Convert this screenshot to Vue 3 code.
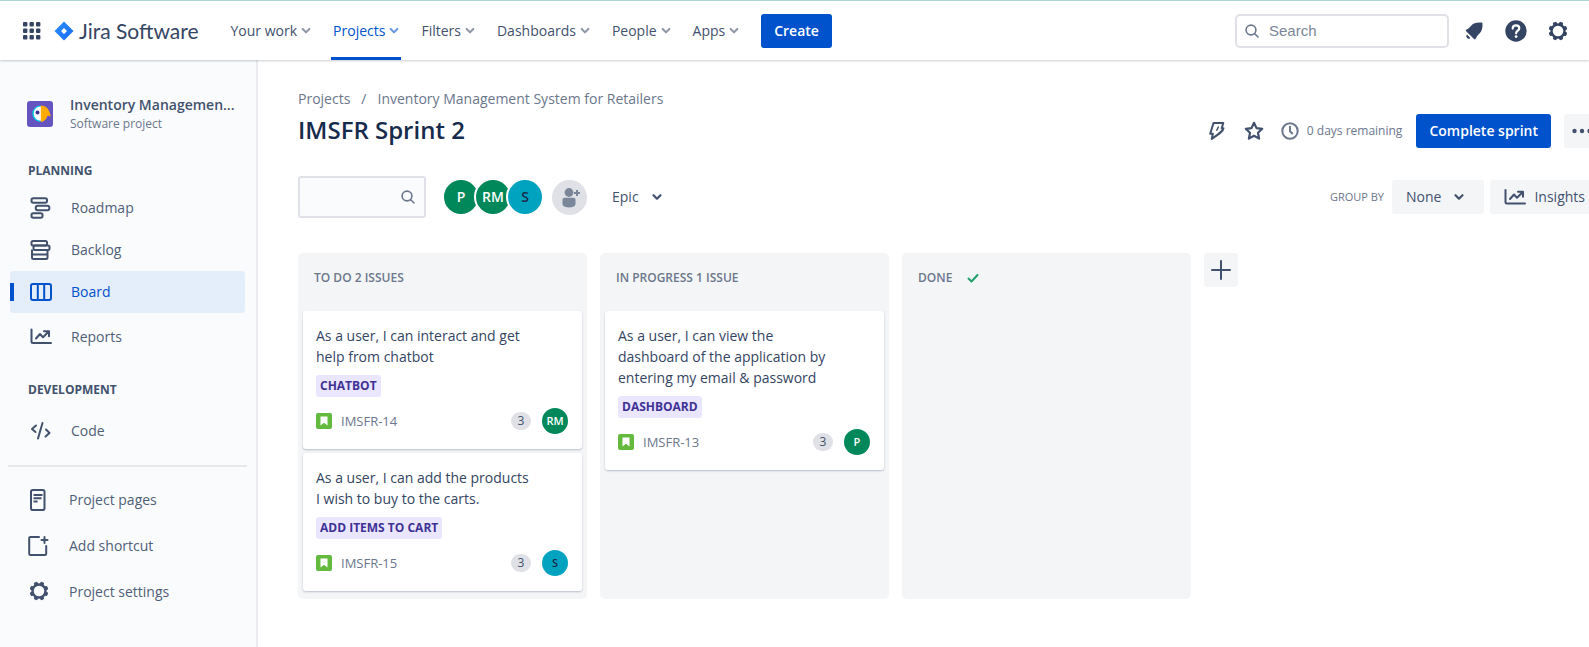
<script setup>
const navItems = [
  { label: 'Your work' },
  { label: 'Projects', active: true },
  { label: 'Filters' },
  { label: 'Dashboards' },
  { label: 'People' },
  { label: 'Apps' },
]

const members = [
  { initials: 'P', tone: 'green' },
  { initials: 'RM', tone: 'green' },
  { initials: 'S', tone: 'teal' },
]

const columns = [
  {
    title: 'To do 2 issues',
    cards: [
      { text: 'As a user, I can interact and get help from chatbot', epic: 'Chatbot', key: 'IMSFR-14', points: 3, initials: 'RM', tone: 'green' },
      { text: 'As a user, I can add the products I wish to buy to the carts.', epic: 'Add items to cart', key: 'IMSFR-15', points: 3, initials: 'S', tone: 'teal' },
    ],
  },
  {
    title: 'In progress 1 issue',
    cards: [
      { text: 'As a user, I can view the dashboard of the application by entering my email & password', epic: 'Dashboard', key: 'IMSFR-13', points: 3, initials: 'P', tone: 'green' },
    ],
  },
  { title: 'Done', done: true, cards: [] },
]

const teeth = [0, 45, 90, 135, 180, 225, 270, 315]
</script>

<template>
  <div class="app">
    <header class="topbar">
      <button class="icon-btn" aria-label="Switch to">
        <svg width="18" height="18" viewBox="0 0 18 18" fill="#344563">
          <template v-for="r in 3" :key="r">
            <rect v-for="c in 3" :key="c" :x="(c - 1) * 6.5" :y="(r - 1) * 6.5" width="4.4" height="4.4" rx="1" />
          </template>
        </svg>
      </button>
      <a class="brand" href="#">
        <svg width="20" height="20" viewBox="0 0 20 20">
          <defs>
            <linearGradient id="brandShade" x1="0" y1="0" x2="1" y2="1">
              <stop offset="0.3" stop-color="#2684ff" />
              <stop offset="1" stop-color="#1868e8" />
            </linearGradient>
          </defs>
          <path d="M10 .5 19.5 10 10 19.5.5 10Z M10 7 7 10l3 3 3-3Z" fill="url(#brandShade)" fill-rule="evenodd" stroke-linejoin="round" />
        </svg>
        <span>Jira Software</span>
      </a>
      <nav class="topnav" aria-label="Primary">
        <button v-for="n in navItems" :key="n.label" class="topnav-item" :class="{ active: n.active }">
          <span>{{ n.label }}</span>
          <svg width="10" height="8" viewBox="0 0 10 8" fill="none" stroke="currentColor" stroke-width="2" stroke-linecap="round" stroke-linejoin="round"><path d="m1.7 2 3.3 3.4L8.3 2" /></svg>
        </button>
      </nav>
      <button class="primary">Create</button>
      <div class="topbar-end">
        <label class="search">
          <svg width="16" height="16" viewBox="0 0 16 16" fill="none" stroke="#6b778c" stroke-width="1.6" stroke-linecap="round"><circle cx="7" cy="7" r="4.9" /><path d="m10.7 10.7 3.3 3.3" /></svg>
          <input type="text" placeholder="Search" aria-label="Search" />
        </label>
        <button class="icon-btn" aria-label="Notifications">
          <svg width="20" height="20" viewBox="0 0 20 20" fill="#344563"><path d="M2.2 10.2c-.7-.7-.4-1.4.4-1.7 2.2-.8 3.4-2.4 5-4.2C9.6 2 12.6 1.3 17.3 1.6c.8 0 1.2.4 1.2 1.2.2 4.7-.8 7.6-3 9.6-1.9 1.7-3 3.3-3.9 5.4-.3.8-1 .9-1.6.3Z" /><path d="M3 13.6a2.3 2.3 0 0 0 3.4 3.3Z" /></svg>
        </button>
        <button class="icon-btn" aria-label="Help">
          <svg width="22" height="22" viewBox="0 0 22 22"><circle cx="11" cy="11" r="10.7" fill="#344563" /><path d="M7.7 8.6c0-2 1.4-3.2 3.3-3.2s3.3 1.2 3.3 2.9c0 2.3-3.2 2.500-3.2 5" fill="none" stroke="#fff" stroke-width="2.2" stroke-linecap="round" /><circle cx="11.1" cy="16.6" r="1.4" fill="#fff" /></svg>
        </button>
        <button class="icon-btn" aria-label="Settings">
          <svg width="20" height="20" viewBox="0 0 20 20"><circle cx="10" cy="10" r="6.5" fill="none" stroke="#344563" stroke-width="2.4" /><rect v-for="a in teeth" :key="a" x="8" y="0.6" width="4" height="3.6" rx="1.2" fill="#344563" :transform="`rotate(${a + 22.5} 10 10)`" /></svg>
        </button>
      </div>
    </header>

    <div class="body">
      <aside class="sidebar">
        <div class="project">
          <svg width="26" height="26" viewBox="0 0 26 26">
            <rect width="26" height="26" rx="3" fill="#6554c0" />
            <path d="M13.5 4.5a8.2 8.2 0 0 0 0 16.4Z" fill="#00c7e5" />
            <path d="M14 5.6c-4.5 0-7.2 3.2-7.2 7s2.7 7.2 7.2 7.2Z" fill="#fff" />
            <path d="M13.8 4.6c5.2 0 8.6 3.2 10 11.2-1.2-.9-2-1.1-3.4-.9-1.2 3.6-3.4 5.9-6.6 6Z" fill="#ffab00" />
            <circle cx="10.5" cy="11.4" r="2" fill="#403294" />
          </svg>
          <div class="project-text">
            <div class="project-name">Inventory Managemen...</div>
            <div class="project-type">Software project</div>
          </div>
        </div>

        <h2 class="section">Planning</h2>
        <nav class="side-list" aria-label="Planning">
          <a class="side-item" href="#">
            <svg width="22" height="22" viewBox="0 0 22 22" fill="none" stroke="#42526e" stroke-width="2"><rect x="1.5" y="1.2" width="15.5" height="4.6" rx="1.8" /><rect x="5.8" y="8.7" width="13.5" height="4.6" rx="1.8" /><rect x="1.5" y="16.2" width="11" height="4.6" rx="1.8" /></svg>
            <span>Roadmap</span>
          </a>
          <a class="side-item" href="#">
            <svg width="22" height="22" viewBox="0 0 22 22" fill="none" stroke="#42526e" stroke-width="2"><rect x="1.5" y="2" width="15.5" height="4.5" rx="1.5" /><rect x="3.5" y="6.5" width="16" height="4.5" rx="1.5" /><path d="M2 10.5v8.2c0 .8.5 1.3 1.3 1.3h12.9c.8 0 1.3-.5 1.3-1.3V11M2 15.5h15.5" /></svg>
            <span>Backlog</span>
          </a>
          <a class="side-item selected" href="#" aria-current="page">
            <svg width="22" height="22" viewBox="0 0 22 22" fill="none" stroke="#0052cc" stroke-width="2"><rect x="1" y="3" width="20" height="16" rx="2" /><path d="M7.8 3v16M14.2 3v16" /></svg>
            <span>Board</span>
          </a>
          <a class="side-item spaced" href="#">
            <svg width="22" height="22" viewBox="0 0 22 22" fill="none" stroke="#42526e" stroke-width="2" stroke-linecap="round" stroke-linejoin="round"><path d="M1.5 3.5v12A1.500 1.500 0 0 0 3 17h18M6 12.500 10 8l3 3.300 5.500-5.600M14 5.200h5v5" /></svg>
            <span>Reports</span>
          </a>
        </nav>

        <h2 class="section">Development</h2>
        <nav class="side-list development" aria-label="Development">
          <a class="side-item" href="#">
            <svg width="22" height="22" viewBox="0 0 22 22" fill="none" stroke="#42526e" stroke-width="2" stroke-linecap="round" stroke-linejoin="round"><path d="M6 5.500 2 9l3.500 3M12.500 3 8 18.500M16 9.500l3.500 3.500-4 3.500" /></svg>
            <span>Code</span>
          </a>
        </nav>

        <hr />

        <nav class="side-list extra" aria-label="Project">
          <a class="side-item" href="#">
            <svg width="22" height="22" viewBox="0 0 22 22" fill="none" stroke="#42526e" stroke-width="2"><rect x="3" y="1" width="13.5" height="20" rx="1.8" /><path d="M5.5 6h9M5.5 9.200h8M5.500 12.500h4" /></svg>
            <span>Project pages</span>
          </a>
          <a class="side-item" href="#">
            <svg width="22" height="22" viewBox="0 0 22 22" fill="none" stroke="#42526e" stroke-width="2" stroke-linecap="round"><path d="M11 2H2.500A1.200 1.200 0 0 0 1.200 3.200v15.600c0 .7.500 1.200 1.200 1.200H17c.7 0 1.200-.5 1.200-1.200V11" /><path d="M16.500 2v6M13.500 5h6" /></svg>
            <span>Add shortcut</span>
          </a>
          <a class="side-item" href="#">
            <svg width="22" height="22" viewBox="0 0 22 22"><circle cx="11" cy="10" r="6.5" fill="none" stroke="#42526e" stroke-width="2.4" /><rect v-for="a in teeth" :key="a" x="9" y="0.6" width="4" height="3.6" rx="1.2" fill="#42526e" :transform="`rotate(${a + 22.5} 11 10)`" /></svg>
            <span>Project settings</span>
          </a>
        </nav>
      </aside>

      <main class="main">
        <nav class="crumbs" aria-label="Breadcrumbs">
          <a href="#">Projects</a>
          <span>/</span>
          <a href="#">Inventory Management System for Retailers</a>
        </nav>

        <div class="title-row">
          <h1>IMSFR Sprint 2</h1>
          <div class="actions">
            <button class="icon-btn" aria-label="Automation">
              <svg width="20" height="20" viewBox="0 0 20 20" fill="none" stroke="#42526e" stroke-width="2" stroke-linejoin="round" stroke-linecap="round"><path d="M6.500 2h9.800l-1.600 5.200h1.800c-.3 3-4.300 5.600-11.800 10.800l1.200-5.200H3.200Z" /><path d="m11.300 6-1.500 3.200" stroke-width="1.500" /></svg>
            </button>
            <button class="icon-btn star" aria-label="Star">
              <svg width="20" height="20" viewBox="0 0 20 20" fill="none" stroke="#42526e" stroke-width="2.200" stroke-linejoin="round"><path d="m10 1.800 2.500 5.300 5.700.7-4.200 4 1.100 5.800-5.100-2.800-5.100 2.800L6 11.800l-4.200-4 5.700-.7Z" /></svg>
            </button>
            <div class="remaining">
              <svg width="18" height="18" viewBox="0 0 18 18" fill="none" stroke="#6b778c" stroke-width="2" stroke-linecap="round" stroke-linejoin="round"><circle cx="9" cy="9" r="7.700" /><path d="M9 4.800V9.300l2.200 2.200" /></svg>
              <span>0 days remaining</span>
            </div>
            <button class="primary complete">Complete sprint</button>
            <button class="subtle" aria-label="More">
              <svg width="20" height="6" viewBox="0 0 20 6" fill="#42526e"><circle cx="2.500" cy="3" r="2.200" /><circle cx="10" cy="3" r="2.200" /><circle cx="17.500" cy="3" r="2.200" /></svg>
            </button>
          </div>
        </div>

        <div class="toolbar">
          <label class="filter">
            <input type="text" aria-label="Search this board" />
            <svg width="16" height="16" viewBox="0 0 16 16" fill="none" stroke="#6b778c" stroke-width="1.600" stroke-linecap="round"><circle cx="7" cy="7" r="4.900" /><path d="m10.700 10.700 3.300 3.300" /></svg>
          </label>
          <div class="members">
            <button v-for="m in members" :key="m.initials" class="member" :class="m.tone">{{ m.initials }}</button>
          </div>
          <button class="add-member" aria-label="Add people">
            <svg width="22" height="22" viewBox="0 0 22 22" fill="#7a869a"><circle cx="10" cy="6.500" r="4.400" /><path d="M3.500 14c0-1.300.8-2.200 2-2.200h9c1.200 0 2 .9 2 2.200v3.500c0 2.600-2.500 3.900-6.500 3.900s-6.500-1.300-6.500-3.900Z" /><path d="M18 4v6M15 7h6" stroke="#7a869a" stroke-width="2" /></svg>
          </button>
          <button class="plain">
            <span>Epic</span>
            <svg width="12" height="8" viewBox="0 0 12 8" fill="none" stroke="#42526e" stroke-width="2.200" stroke-linecap="round" stroke-linejoin="round"><path d="M2.500 2.200 6 5.700l3.500-3.500" /></svg>
          </button>
          <div class="toolbar-end">
            <span class="group-label">GROUP BY</span>
            <button class="subtle group">
              <span>None</span>
              <svg width="12" height="8" viewBox="0 0 12 8" fill="none" stroke="#42526e" stroke-width="2.200" stroke-linecap="round" stroke-linejoin="round"><path d="M2.500 2.200 6 5.700l3.500-3.500" /></svg>
            </button>
            <button class="subtle insights">
              <svg width="22" height="20" viewBox="0 0 22 20" fill="none" stroke="#42526e" stroke-width="2" stroke-linecap="round" stroke-linejoin="round"><path d="M1.500 3v12A1.500 1.500 0 0 0 3 16.500h18M6 12l4-4.500 3 3.300 5.500-5.600M14 4.700h5v5" /></svg>
              <span>Insights</span>
            </button>
          </div>
        </div>

        <div class="board">
          <section v-for="col in columns" :key="col.title" class="column">
            <h2 class="column-title">
              <span>{{ col.title }}</span>
              <svg v-if="col.done" width="14" height="12" viewBox="0 0 14 12" fill="none" stroke="#22a06b" stroke-width="2" stroke-linecap="round" stroke-linejoin="round"><path d="m2.500 6.500 3 3 6-6.500" /></svg>
            </h2>
            <article v-for="card in col.cards" :key="card.key" class="card">
              <p class="card-text">{{ card.text }}</p>
              <span class="epic">{{ card.epic }}</span>
              <div class="card-foot">
                <svg width="16" height="16" viewBox="0 0 16 16"><rect width="16" height="16" rx="2" fill="#63ba3c" /><path d="M4.500 3.500h7v9L8 9.800l-3.500 2.700Z" fill="#fff" /></svg>
                <a class="key" href="#">{{ card.key }}</a>
                <span class="points">{{ card.points }}</span>
                <span class="avatar" :class="card.tone">{{ card.initials }}</span>
              </div>
            </article>
          </section>
          <button class="subtle add-column" aria-label="Create column">
            <svg width="20" height="20" viewBox="0 0 20 20" stroke="#42526e" stroke-width="2" stroke-linecap="round"><path d="M10 1v18M1 10h18" /></svg>
          </button>
        </div>
      </main>
    </div>
  </div>
</template>

<style>
body {
  margin: 0;
  background: #fff;
}
</style>

<style scoped>
.app {
  display: flex;
  flex-direction: column;
  min-height: 100vh;
  overflow: hidden;
  font-family: 'Open Sans', 'Noto Sans', sans-serif;
  font-size: 14px;
  line-height: 20px;
  color: #42526e;
}
.app *,
.app *::before {
  box-sizing: border-box;
}
button {
  display: inline-flex;
  align-items: center;
  justify-content: center;
  margin: 0;
  padding: 0;
  border: 0;
  background: none;
  font: inherit;
  color: inherit;
  white-space: nowrap;
  cursor: pointer;
}
a {
  color: inherit;
  text-decoration: none;
}
svg {
  display: block;
  flex: none;
}

/* Top bar */
.topbar {
  display: flex;
  align-items: center;
  height: 60px;
  padding: 0 21px 0 23px;
  border-top: 1px solid #a9d5d3;
  background: #fff;
  box-shadow: 0 1px 2px rgba(9, 30, 66, 0.22);
  position: relative;
}
.brand {
  display: flex;
  align-items: center;
  gap: 5px;
  margin-left: 13px;
  font-family: Lato, sans-serif;
  font-size: 21px;
  line-height: 24px;
  color: #344563;
  white-space: nowrap;
}
.topnav {
  display: flex;
  align-self: stretch;
  gap: 18px;
  margin: 0 20px 0 30px;
}
.topnav-item {
  gap: 4px;
  padding: 3px 2px 0;
  border-bottom: 3px solid transparent;
  font-weight: 500;
}
.topnav-item svg {
  opacity: 0.6;
}
.topnav-item.active {
  border-bottom-color: #0052cc;
  color: #0052cc;
}
.primary {
  height: 34px;
  padding: 0 13px;
  border-radius: 3px;
  background: #0052cc;
  color: #fff;
  font-weight: 600;
}
.topbar-end {
  display: flex;
  align-items: center;
  gap: 21px;
  margin-left: auto;
}
.search {
  display: flex;
  align-items: center;
  gap: 9px;
  width: 214px;
  height: 34px;
  margin-right: -6px;
  padding: 0 7px;
  border: 2px solid #dfe1e6;
  border-radius: 5px;
}
input {
  min-width: 0;
  flex: 1;
  padding: 0;
  border: 0;
  outline: 0;
  background: none;
  font-family: 'Liberation Sans', sans-serif;
  font-size: 15px;
  color: #42526e;
}
input::placeholder {
  color: #7a869a;
  opacity: 1;
}

/* Sidebar */
.body {
  display: flex;
  flex: 1;
}
.sidebar {
  flex: none;
  width: 258px;
  padding: 35px 11px 24px 10px;
  border-right: 2px solid #ebecf0;
  background: #fafbfc;
}
.project {
  display: flex;
  align-items: center;
  gap: 17px;
  padding-left: 17px;
}
.project-name {
  font-weight: 600;
  white-space: nowrap;
}
.project-type {
  font-size: 12px;
  line-height: 18px;
  color: #6b778c;
}
.section {
  margin: 29px 0 0 18px;
  font-size: 12px;
  line-height: 18px;
  font-weight: 700;
  text-transform: uppercase;
}
.side-list {
  display: flex;
  flex-direction: column;
  padding-top: 7px;
}
.side-item {
  display: flex;
  align-items: center;
  gap: 19px;
  height: 42px;
  padding-left: 20px;
  border-radius: 4px;
  color: #505f79;
  position: relative;
}
.side-item.selected {
  background: #e4eefb;
  color: #0052cc;
}
.side-item.selected::before {
  content: '';
  position: absolute;
  left: 0;
  top: 12px;
  width: 4px;
  height: 18px;
  background: #0052cc;
}
.side-item.spaced {
  margin-top: 3px;
}
.side-list + .section {
  margin-top: 23px;
}
.development {
  padding-top: 11px;
}
hr {
  margin: 13px -2px 0;
  border: 0;
  border-top: 2px solid #e6e8ec;
}
.extra {
  gap: 4px;
  padding-top: 12px;
}
.extra .side-item {
  padding-left: 18px;
}

/* Main */
.main {
  flex: 1;
  min-width: 0;
  padding: 29px 0 24px 40px;
}
.crumbs {
  display: flex;
  gap: 11px;
  color: #6b778c;
}
.title-row {
  display: flex;
  align-items: center;
  justify-content: space-between;
  margin-top: 5px;
  margin-right: -11px;
}
h1 {
  margin: 0;
  align-self: flex-start;
  font-size: 24px;
  line-height: 32px;
  font-weight: 600;
  color: #172b4d;
}
.actions {
  display: flex;
  align-items: center;
}
.star {
  margin: 0 17px;
}
.remaining {
  display: flex;
  align-items: center;
  gap: 8px;
  margin-right: 14px;
  font-size: 12px;
  color: #6b778c;
}
.complete {
  margin-right: 13px;
}
.subtle {
  height: 34px;
  padding: 0 8px;
  border-radius: 3px;
  background: #f4f5f7;
  font-weight: 500;
}
.toolbar {
  display: flex;
  align-items: center;
  margin-top: 28px;
  margin-right: -11px;
}
.filter {
  display: flex;
  align-items: center;
  width: 128px;
  height: 42px;
  padding: 0 8px;
  border: 2px solid #dfe1e6;
  border-radius: 3px;
  background: #fafbfc;
}
.members {
  display: flex;
  margin-left: 16px;
}
.member {
  width: 38px;
  height: 38px;
  border: 2px solid #fff;
  border-radius: 50%;
  font-weight: 600;
}
.member + .member {
  margin-left: -6px;
}
.green {
  background: #00875a;
  color: #fff;
}
.teal {
  background: #00a3bf;
  color: #172b4d;
}
.add-member {
  width: 35px;
  height: 35px;
  margin-left: 8px;
  border-radius: 50%;
  background: #dfe1e6;
}
.plain {
  gap: 12px;
  margin-left: 25px;
  font-weight: 500;
}
.toolbar-end {
  display: flex;
  align-items: center;
  margin-left: auto;
}
.group-label {
  margin-right: 8px;
  font-size: 11px;
  color: #6b778c;
}
.group {
  gap: 12px;
  margin-right: 6px;
  padding: 0 19px 0 14px;
}
.insights {
  gap: 8px;
  padding: 0 15px 0 14px;
}

/* Board */
.board {
  display: flex;
  gap: 13px;
  margin-top: 35px;
  padding-right: 40px;
}
.column {
  flex: 0 1 289px;
  min-width: 0;
  padding: 0 5px 8px;
  border-radius: 5px;
  background: #f4f5f7;
}
.column-title {
  display: flex;
  align-items: center;
  gap: 14px;
  height: 50px;
  margin: 0 0 8px;
  padding-left: 11px;
  font-size: 12px;
  font-weight: 600;
  color: #6b778c;
  text-transform: uppercase;
}
.card {
  padding: 14px 14px 15px 13px;
  border-radius: 3px;
  background: #fff;
  box-shadow: 0 1px 2px rgba(9, 30, 66, 0.25);
}
.card + .card {
  margin-top: 4px;
}
.card-text {
  margin: 0 32px 8px 0;
  line-height: 21px;
  color: #344563;
}
.epic {
  display: inline-block;
  padding: 0 4px;
  border-radius: 3px;
  background: #eae6ff;
  font-size: 12px;
  line-height: 22px;
  font-weight: 700;
  color: #403294;
  text-transform: uppercase;
  vertical-align: top;
}
.card-foot {
  display: flex;
  align-items: center;
  margin-top: 11px;
}
.key {
  margin-left: 9px;
  font-size: 13px;
  font-weight: 500;
  color: #6b778c;
}
.points {
  min-width: 20px;
  margin: 0 11px 0 auto;
  border-radius: 9px;
  background: #dfe1e6;
  font-size: 12px;
  line-height: 18px;
  text-align: center;
}
.avatar {
  width: 26px;
  border-radius: 50%;
  font-size: 11px;
  line-height: 26px;
  font-weight: 600;
  text-align: center;
}
.add-column {
  width: 34px;
}
</style>
